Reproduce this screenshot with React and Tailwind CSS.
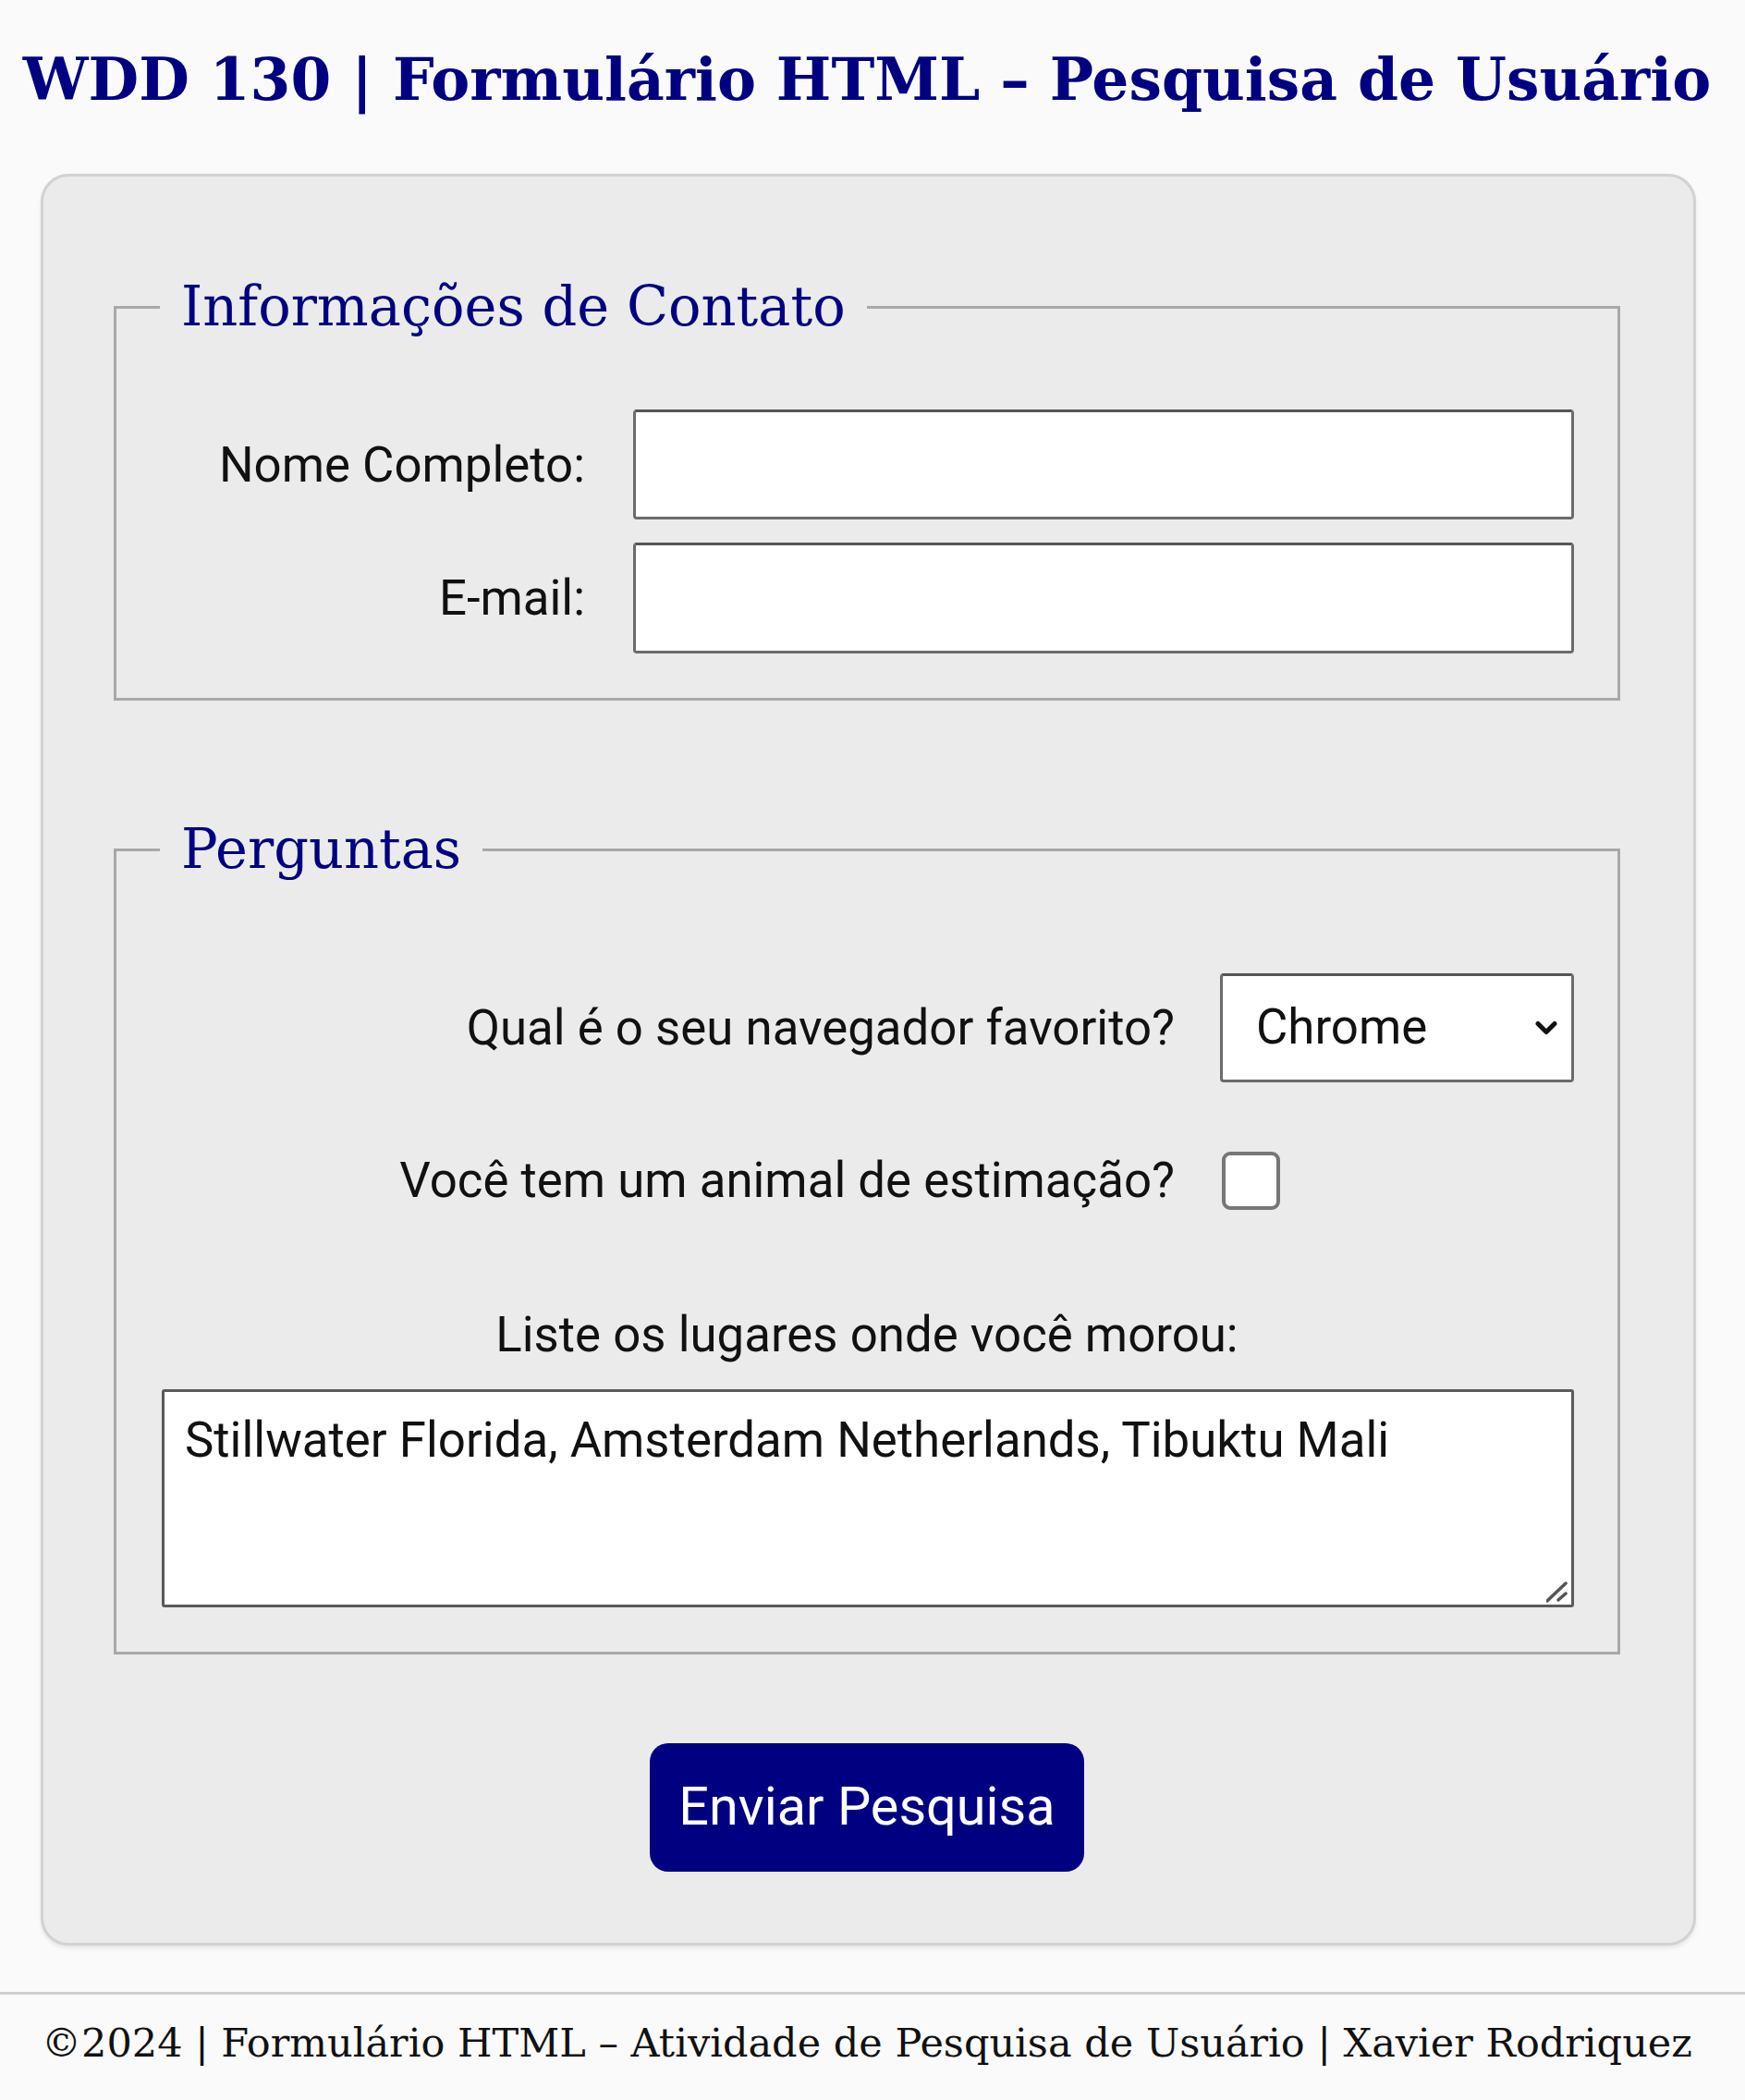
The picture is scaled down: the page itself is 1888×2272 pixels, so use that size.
import React from "react";

// Survey page: title, card with two fieldsets and a submit button, footer.
function Chevron() {
  return (
    <svg
      className="pointer-events-none absolute right-[18px] top-1/2 -translate-y-1/2"
      width="24"
      height="15"
      viewBox="0 0 24 15"
      fill="none"
    >
      <path d="M3 3 L12 12 L21 3" stroke="#111" strokeWidth="5" strokeLinecap="round" strokeLinejoin="round" />
    </svg>
  );
}

function ResizeGrip() {
  return (
    <svg
      className="pointer-events-none absolute bottom-[4px] right-[6px]"
      width="24"
      height="24"
      viewBox="0 0 24 24"
      fill="none"
    >
      <path d="M1 21 L21 2" stroke="#555" strokeWidth="3.5" strokeLinecap="round" />
      <path d="M13 20 L21 13" stroke="#555" strokeWidth="3.5" strokeLinecap="round" />
    </svg>
  );
}

export default function App() {
  return (
    <div className="min-h-[2272px] bg-[#fafafa] font-['Roboto',sans-serif] text-[52.8px] text-[#111]">
      <h1 className="pr-[12px] pt-[46px] text-center font-['DejaVu_Serif',serif] text-[63px] font-bold leading-[80px] text-[#000080]">
        WDD 130 | Formulário HTML – Pesquisa de Usuário
      </h1>

      <main className="ml-[44px] mt-[62px] w-[1791px] rounded-[30px] border-[3px] border-[#d2d2d2] bg-[#ebebeb] pb-[77px] pl-[76px] pr-[79px] pt-[105px] shadow-[0_3px_4px_rgba(0,0,0,0.08)]">
        <form onSubmit={(e) => e.preventDefault()}>
          <fieldset className="border-[3px] border-[#a8a8a8] px-[47px] pb-[48px] pt-[75px]">
            <legend className="px-[23px] font-['DejaVu_Serif',serif] text-[59px] leading-[72px] text-[#000080]">
              Informações de Contato
            </legend>
            <div className="grid grid-cols-[460px_1fr] items-center gap-x-[52px] gap-y-[25px]">
              <label htmlFor="nome" className="text-right leading-[62px]">
                Nome Completo:
              </label>
              <input
                id="nome"
                type="text"
                className="h-[119px] w-full rounded-[4px] border-[3px] border-[#6b6b6b] border-t-[#555] bg-white px-[20px] outline-none"
              />
              <label htmlFor="email" className="text-right leading-[62px]">
                E-mail:
              </label>
              <input
                id="email"
                type="email"
                className="h-[120px] w-full rounded-[4px] border-[3px] border-[#6b6b6b] border-t-[#555] bg-white px-[20px] outline-none"
              />
            </div>
          </fieldset>

          <fieldset className="mt-[125px] border-[3px] border-[#a8a8a8] px-[47px] pb-[48px] pt-[98px]">
            <legend className="px-[23px] font-['DejaVu_Serif',serif] text-[59px] leading-[72px] text-[#000080]">
              Perguntas
            </legend>

            <div className="grid grid-cols-[1fr_383px] items-center gap-x-[49px]">
              <label htmlFor="navegador" className="text-right leading-[62px]">
                Qual é o seu navegador favorito?
              </label>
              <div className="relative h-[118px]">
                <select
                  id="navegador"
                  defaultValue="Chrome"
                  className="h-full w-full appearance-none rounded-[4px] border-[3px] border-[#6b6b6b] border-t-[#555] bg-white pl-[36px] text-[52.8px] text-[#111] outline-none"
                >
                  <option>Chrome</option>
                  <option>Firefox</option>
                  <option>Safari</option>
                  <option>Edge</option>
                </select>
                <Chevron />
              </div>
            </div>

            <div className="mt-[74px] grid h-[64px] grid-cols-[1fr_383px] items-center gap-x-[49px]">
              <label htmlFor="pet" className="text-right leading-[62px]">
                Você tem um animal de estimação?
              </label>
              <div className="pl-[2px]">
                <input
                  id="pet"
                  type="checkbox"
                  className="block h-[63px] w-[63px] appearance-none rounded-[9px] border-[4px] border-[#777] bg-white"
                />
              </div>
            </div>

            <label htmlFor="lugares" className="mt-[104px] block text-center leading-[62px]">
              Liste os lugares onde você morou:
            </label>
            <div className="relative mt-[28px] pl-[2px]">
              <textarea
                id="lugares"
                defaultValue="Stillwater Florida, Amsterdam Netherlands, Tibuktu Mali"
                className="block h-[236px] w-full resize-none rounded-[3px] border-[3px] border-[#5a5a5a] bg-white px-[22px] pt-[21px] text-[52.8px] leading-[62px] text-[#111] outline-none"
              />
              <ResizeGrip />
            </div>
          </fieldset>

          <div className="mt-[96px] flex justify-center">
            <button
              type="submit"
              className="h-[139px] w-[470px] rounded-[20px] bg-[#000080] text-[57.6px] text-white"
            >
              Enviar Pesquisa
            </button>
          </div>
        </form>
      </main>

      <footer className="mt-[50px] whitespace-nowrap border-t-[3px] border-[#cfcfcf] pb-[30px] pr-[12px] pt-[24px] text-center font-['DejaVu_Serif',serif] text-[43px] leading-[56px] text-[#111]">
        ©2024 | Formulário HTML – Atividade de Pesquisa de Usuário | Xavier Rodriquez
      </footer>
    </div>
  );
}
